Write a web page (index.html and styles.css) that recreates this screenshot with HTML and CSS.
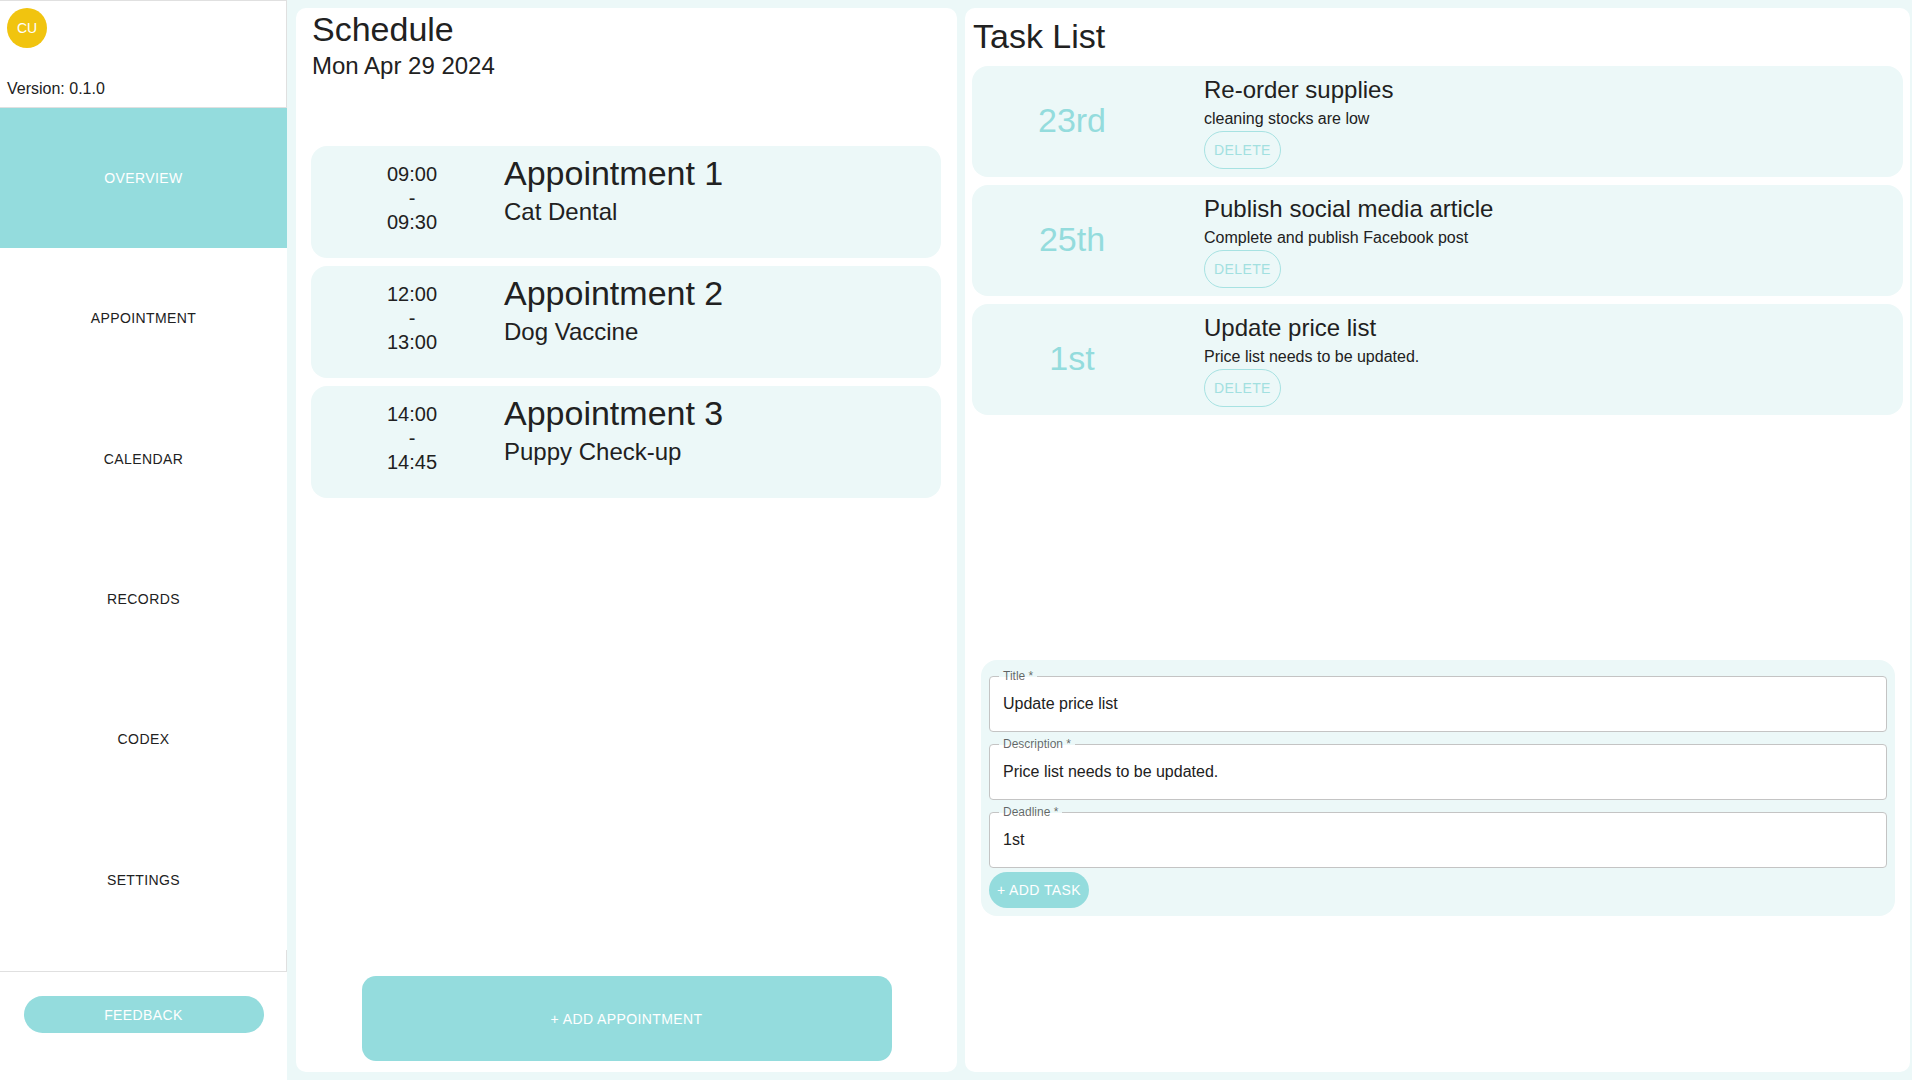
FILE: index.html
```html
<!DOCTYPE html>
<html lang="en">
<head>
<meta charset="utf-8">
<title>Overview</title>
<link rel="stylesheet" href="styles.css">
</head>
<body>
<div class="app">
  <aside class="sidebar">
    <div class="side-header">
      <div class="avatar">CU</div>
      <div class="version">Version: 0.1.0</div>
    </div>
    <nav class="nav">
      <div class="nav-item active">OVERVIEW</div>
      <div class="nav-item">APPOINTMENT</div>
      <div class="nav-item">CALENDAR</div>
      <div class="nav-item">RECORDS</div>
      <div class="nav-item">CODEX</div>
      <div class="nav-item">SETTINGS</div>
    </nav>
    <div class="side-sep"></div>
    <div class="side-footer">
      <button class="feedback">FEEDBACK</button>
    </div>
  </aside>

  <main class="main">
    <section class="schedule">
      <h1 class="h4">Schedule</h1>
      <div class="h5">Mon Apr 29 2024</div>
      <div class="appts">
        <div class="appt">
          <div class="appt-time">09:00<br>-<br>09:30</div>
          <div class="appt-body">
            <div class="h4">Appointment 1</div>
            <div class="h5 appt-sub">Cat Dental</div>
          </div>
        </div>
        <div class="appt">
          <div class="appt-time">12:00<br>-<br>13:00</div>
          <div class="appt-body">
            <div class="h4">Appointment 2</div>
            <div class="h5 appt-sub">Dog Vaccine</div>
          </div>
        </div>
        <div class="appt">
          <div class="appt-time">14:00<br>-<br>14:45</div>
          <div class="appt-body">
            <div class="h4">Appointment 3</div>
            <div class="h5 appt-sub">Puppy Check-up</div>
          </div>
        </div>
      </div>
      <button class="add-appt">+ ADD APPOINTMENT</button>
    </section>

    <section class="tasks">
      <h1 class="h4 tasks-title">Task List</h1>
      <div class="task-list">
        <div class="task">
          <div class="task-date">23rd</div>
          <div class="task-body">
            <div class="h5">Re-order supplies</div>
            <div class="body1">cleaning stocks are low</div>
            <button class="delete">DELETE</button>
          </div>
        </div>
        <div class="task">
          <div class="task-date">25th</div>
          <div class="task-body">
            <div class="h5">Publish social media article</div>
            <div class="body1">Complete and publish Facebook post</div>
            <button class="delete">DELETE</button>
          </div>
        </div>
        <div class="task">
          <div class="task-date">1st</div>
          <div class="task-body">
            <div class="h5">Update price list</div>
            <div class="body1">Price list needs to be updated.</div>
            <button class="delete">DELETE</button>
          </div>
        </div>
      </div>
      <form class="task-form">
        <div class="field">
          <label class="field-label">Title *</label>
          <input class="field-input" value="Update price list" readonly>
        </div>
        <div class="field">
          <label class="field-label">Description *</label>
          <input class="field-input" value="Price list needs to be updated." readonly>
        </div>
        <div class="field">
          <label class="field-label">Deadline *</label>
          <input class="field-input" value="1st" readonly>
        </div>
        <button type="button" class="add-task">+ ADD TASK</button>
      </form>
    </section>
  </main>
</div>
</body>
</html>
```

FILE: styles.css
```css
* { box-sizing: border-box; }

html, body {
  margin: 0;
  padding: 0;
  background: #ffffff;
  font-family: "Liberation Sans", Arial, sans-serif;
  color: #212121;
}

.app {
  display: flex;
  width: 1912px;
  height: 1080px;
  overflow: hidden;
}

/* ---------- Sidebar ---------- */
.sidebar {
  width: 287px;
  flex: 0 0 287px;
  display: flex;
  flex-direction: column;
  background: #ffffff;
}

.side-header {
  height: 108px;
  border-top: 1px solid #e0e0e0;
  border-right: 1px solid #e0e0e0;
  border-bottom: 1px solid #e0e0e0;
  padding: 7px 0 0 7px;
}

.avatar {
  width: 40px;
  height: 40px;
  border-radius: 50%;
  background: #f1c40f;
  color: #ffffff;
  font-size: 14px;
  display: flex;
  align-items: center;
  justify-content: center;
}

.version {
  margin-top: 29px;
  font-size: 16px;
  line-height: 24px;
  color: #212121;
}

.nav {
  display: flex;
  flex-direction: column;
  height: 842px;
}

.nav-item {
  flex: 1;
  display: flex;
  align-items: center;
  justify-content: center;
  font-size: 14px;
  letter-spacing: 0.4px;
  color: #212121;
}

.nav-item.active {
  background: #94dcdd;
  color: #ffffff;
}

.side-sep {
  height: 22px;
  border-right: 1px solid #e0e0e0;
  border-bottom: 1px solid #e0e0e0;
}

.side-footer {
  flex: 1;
  display: flex;
  justify-content: center;
  padding-top: 24px;
}

.feedback {
  width: 240px;
  height: 37px;
  border: none;
  border-radius: 19px;
  background: #94dcdd;
  color: #ffffff;
  font-family: inherit;
  font-size: 14px;
  letter-spacing: 0.4px;
}

/* ---------- Main ---------- */
.main {
  flex: 1;
  background: #ecf8f8;
  padding: 8px 2px 8px 9px;
  display: grid;
  grid-template-columns: 661px 945px;
  column-gap: 8px;
}

.h4 {
  margin: 0;
  font-size: 34px;
  line-height: 42px;
  font-weight: 400;
}

.h5 {
  font-size: 24px;
  line-height: 32px;
}

.body1 {
  font-size: 16px;
  line-height: 24px;
}

/* Schedule */
.schedule {
  background: #ffffff;
  border-radius: 10px;
  display: flex;
  flex-direction: column;
  padding-left: 16px;
}

.appts {
  margin-top: 64px;
  padding-right: 16px;
  margin-left: -1px;
  display: flex;
  flex-direction: column;
  gap: 8px;
  flex: 1;
}

.appt {
  height: 112px;
  background: #ecf8f8;
  border-radius: 16px;
  display: flex;
}

.appt-time {
  width: 160px;
  margin-left: 21px;
  padding-top: 16px;
  text-align: center;
  font-size: 20px;
  line-height: 24px;
}

.appt-body {
  margin-left: 12px;
  padding-top: 6px;
}

.appt-sub {
  margin-top: 2px;
}

.add-appt {
  align-self: center;
  margin: 0 16px 11px 0;
  width: 530px;
  height: 85px;
  border: none;
  border-radius: 14px;
  background: #94dcdd;
  color: #ffffff;
  font-family: inherit;
  font-size: 14px;
  letter-spacing: 0.4px;
}

/* Tasks */
.tasks {
  background: #ffffff;
  border-radius: 10px;
  padding: 7px 7px 0 7px;
  display: flex;
  flex-direction: column;
}

.tasks-title {
  margin-top: 0;
  padding-left: 1px;
}

.task-list {
  margin-top: 9px;
  height: 594px;
  display: flex;
  flex-direction: column;
  gap: 8px;
}

.task {
  height: 111px;
  background: #ecf8f8;
  border-radius: 16px;
  display: flex;
}

.task-date {
  width: 200px;
  display: flex;
  align-items: center;
  justify-content: center;
  font-size: 34px;
  color: #94dcdd;
  padding-bottom: 2px;
}

.task-body {
  margin-left: 32px;
  padding-top: 8px;
}

.task-body .body1 {
  margin-top: 1px;
}

.delete {
  display: block;
  margin-top: 0;
  height: 38px;
  padding: 0 9px;
  border: 1px solid #a7e2e2;
  border-radius: 19px;
  background: transparent;
  color: #a2e0e0;
  font-family: inherit;
  font-size: 14px;
  letter-spacing: 0.4px;
}

.task-form {
  margin: 0 8px 0 9px;
  background: #ecf8f8;
  border-radius: 16px;
  padding: 16px 8px 8px 8px;
  display: flex;
  flex-direction: column;
  gap: 12px;
}

.field {
  position: relative;
  height: 56px;
  border: 1px solid #c4c4c4;
  border-radius: 4px;
  background: #ffffff;
}

.field-label {
  position: absolute;
  top: -7px;
  left: 9px;
  padding: 0 4px;
  font-size: 12px;
  line-height: 12px;
  color: rgba(0, 0, 0, 0.6);
  background: linear-gradient(to bottom, #ecf8f8 0, #ecf8f8 7px, #ffffff 7px, #ffffff 100%);
}

.field-input {
  width: 100%;
  height: 100%;
  border: none;
  outline: none;
  background: transparent;
  padding: 0 13px;
  font-family: inherit;
  font-size: 16px;
  color: #212121;
}

.add-task {
  align-self: flex-start;
  margin-top: -8px;
  height: 36px;
  padding: 0 8px;
  border: none;
  border-radius: 18px;
  background: #94dcdd;
  color: #ffffff;
  font-family: inherit;
  font-size: 14px;
  letter-spacing: 0.4px;
}
```
